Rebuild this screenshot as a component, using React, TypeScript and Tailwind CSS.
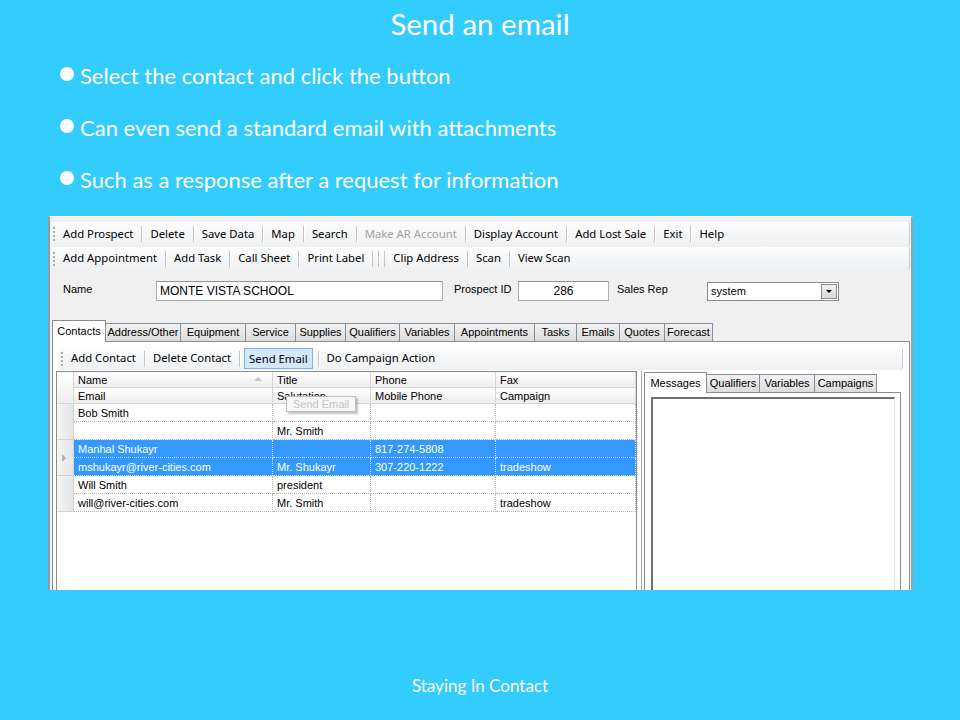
import React from "react";

const ui = "font-['Liberation_Sans',Arial,sans-serif]";
const strip = "font-['Noto_Sans',sans-serif]";

const row1 = ["Add Prospect", "|", "Delete", "|", "Save Data", "|", "Map", "|", "Search", "|", "~Make AR Account", "|", "Display Account", "|", "Add Lost Sale", "|", "Exit", "|", "Help"];
const row2 = ["Add Appointment", "|", "Add Task", "|", "Call Sheet", "|", "Print Label", "|||", "Clip Address", "|", "Scan", "|", "View Scan"];
const contactTools = ["Add Contact", "|", "Delete Contact", "|", "*Send Email", "|", "Do Campaign Action"];

const mainTabs: [string, number][] = [
  ["Address/Other", 75],
  ["Equipment", 65],
  ["Service", 50],
  ["Supplies", 50],
  ["Qualifiers", 54],
  ["Variables", 55],
  ["Appointments", 80],
  ["Tasks", 42],
  ["Emails", 43],
  ["Quotes", 45],
  ["Forecast", 48],
];

const sideTabs: [string, number][] = [
  ["Qualifiers", 53],
  ["Variables", 55],
  ["Campaigns", 62],
];

type Contact = { top: string[]; bottom: string[]; selected?: boolean };

const contacts: Contact[] = [
  { top: ["Bob Smith", "", "", ""], bottom: ["", "Mr. Smith", "", ""] },
  {
    top: ["Manhal Shukayr", "", "817-274-5808", ""],
    bottom: ["mshukayr@river-cities.com", "Mr. Shukayr", "307-220-1222", "tradeshow"],
    selected: true,
  },
  { top: ["Will Smith", "president", "", ""], bottom: ["will@river-cities.com", "Mr. Smith", "", "tradeshow"] },
];

const colWidths = ["w-[199px]", "w-[98px]", "w-[125px]", "w-[140px]"];

function Grip() {
  return <div className="h-[14px] w-0 border-l-2 border-dotted border-[#a8a8a8]" />;
}

function Sep() {
  return <div className="mx-[8px] h-[16px] w-px bg-[#c4c4c4] shadow-[1px_0_0_#ffffff]" />;
}

function ToolRow({ items, h = "h-[24px]" }: { items: string[]; h?: string }) {
  return (
    <div className={`flex ${h} items-center rounded-r-[3px] border-r border-[#c9ced3] bg-linear-to-b from-[#fdfdfd] to-[#eef0f2] ${strip} text-[11.3px] text-black`}>
      <div className="ml-[2px] mr-[8px]">
        <Grip />
      </div>
      {items.map((it, i) => {
        if (it === "|") return <Sep key={i} />;
        if (it === "|||")
          return (
            <div key={i} className="mx-[8px] flex gap-[5px]">
              <div className="h-[16px] w-px bg-[#c4c4c4]" />
              <div className="h-[16px] w-px bg-[#c4c4c4]" />
              <div className="h-[16px] w-px bg-[#c4c4c4]" />
            </div>
          );
        if (it.startsWith("~"))
          return (
            <span key={i} className="whitespace-nowrap text-[#a3a3a3]">
              {it.slice(1)}
            </span>
          );
        if (it.startsWith("*"))
          return (
            <span key={i} className="-ml-[4px] -mr-[3px] whitespace-nowrap border border-[#7eb4ea] bg-[#d1e8ff] px-[4px] leading-[19px]">
              {it.slice(1)}
            </span>
          );
        return (
          <span key={i} className="whitespace-nowrap">
            {it}
          </span>
        );
      })}
    </div>
  );
}

function HeaderCell({ text, w, sort }: { text: string; w: string; sort?: boolean }) {
  return (
    <div className={`relative flex h-[16px] ${w} items-center border-r border-b border-[#d5d5d5] bg-linear-to-b from-[#ffffff] to-[#eeeeee] pl-[4px] leading-[16px]`}>
      {text}
      {sort && <span className="absolute right-[10px] top-[5px] h-0 w-0 border-x-[4px] border-b-[4px] border-x-transparent border-b-[#c4c4c4]" />}
    </div>
  );
}

function DataCell({ text, w, selected }: { text: string; w: string; selected?: boolean }) {
  return (
    <div
      className={`h-[18px] ${w} overflow-hidden whitespace-nowrap border-r border-b border-dotted pl-[4px] leading-[18px] ${
        selected ? "border-[#d6e9ff] bg-[#3399ff] text-white" : "border-[#b4b4b4] text-black"
      }`}
    >
      {text}
    </div>
  );
}

function ContactGrid() {
  return (
    <div className={`relative h-[230px] w-[581px] border border-[#8d8d8d] bg-white ${ui} text-[11px] text-black`}>
      <div className="flex">
        <div className="h-[32px] w-[17px] border-r border-b border-[#d5d5d5] bg-linear-to-b from-[#ffffff] to-[#eeeeee]" />
        <div>
          <div className="flex">
            <HeaderCell text="Name" w={colWidths[0]} sort />
            <HeaderCell text="Title" w={colWidths[1]} />
            <HeaderCell text="Phone" w={colWidths[2]} />
            <HeaderCell text="Fax" w={colWidths[3]} />
          </div>
          <div className="flex">
            <HeaderCell text="Email" w={colWidths[0]} />
            <HeaderCell text="Salutation" w={colWidths[1]} />
            <HeaderCell text="Mobile Phone" w={colWidths[2]} />
            <HeaderCell text="Campaign" w={colWidths[3]} />
          </div>
        </div>
      </div>
      {contacts.map((c, i) => (
        <div key={i} className="flex">
          <div className="relative h-[36px] w-[17px] border-r border-b border-[#d0d0d0] bg-linear-to-r from-[#f4f4f4] to-[#e6e6e6]">
            {c.selected && <span className="absolute left-[5px] top-[14px] h-0 w-0 border-y-[4px] border-l-[4px] border-y-transparent border-l-[#b0b0b0]" />}
          </div>
          <div>
            <div className="flex">
              {c.top.map((t, j) => (
                <DataCell key={j} text={t} w={colWidths[j]} selected={c.selected} />
              ))}
            </div>
            <div className="flex">
              {c.bottom.map((t, j) => (
                <DataCell key={j} text={t} w={colWidths[j]} selected={c.selected} />
              ))}
            </div>
          </div>
        </div>
      ))}
      {/* tooltip fading in over the Salutation header */}
      <div className="absolute left-[229px] top-[24px] flex h-[16px] w-[70px] items-center border border-[#bdbdbd] bg-[#f7f7f7] pl-[6px] text-[11px] text-[#c4c4c4] shadow-[2px_2px_2px_rgba(0,0,0,0.25)]">
        Send Email
      </div>
    </div>
  );
}

function SidePanel() {
  return (
    <div className={`ml-[4px] h-[230px] w-[267px] border-l border-[#a9a9a9] pl-[2px] ${ui} text-[11px] text-black`}>
      <div className="flex h-[21px] items-end">
        <div className="relative z-10 -mb-px flex h-[21px] w-[63px] items-start justify-center border border-b-0 border-[#898c95] bg-white pt-[2px]">
          Messages
        </div>
        {sideTabs.map(([t, w]) => (
          <div
            key={t}
            style={{ width: w }}
            className="flex h-[18px] items-center justify-center border border-l-0 border-b-0 border-[#898c95] bg-linear-to-b from-[#f2f2f2] to-[#dcdcdc]"
          >
            {t}
          </div>
        ))}
      </div>
      <div className="h-[220px] w-[257px] border border-[#898c95] bg-white pl-[6px] pt-[4px]">
        <div className="h-[220px] w-[244px] border-t-2 border-l-2 border-[#6f6f6f] border-r border-r-[#e3e3e3] bg-white" />
      </div>
    </div>
  );
}

function AppWindow() {
  return (
    <div className="ml-[48px] h-[374px] w-[865px] overflow-hidden border-t border-l-2 border-r-2 border-t-white border-l-[#8f9aa5] border-r-[#9aa3ab] bg-[#f0f0f0]">
      <div className="ml-px mr-px mt-[5px] flex flex-col gap-px">
        <ToolRow items={row1} />
        <ToolRow items={row2} h="h-[23px]" />
      </div>

      <div className={`mt-[11px] flex h-[20px] items-center pl-[13px] ${ui} text-[11px] text-black`}>
        <span className="-mt-[3px] w-[93px]">Name</span>
        <div className="flex h-[20px] w-[287px] items-center border border-[#abadb3] border-t-[#8f939c] bg-white pl-[3px] text-[12px]">
          MONTE VISTA SCHOOL
        </div>
        <span className="-mt-[3px] ml-[11px] w-[64px]">Prospect ID</span>
        <div className="flex h-[20px] w-[91px] items-center justify-center border border-[#abadb3] border-t-[#8f939c] bg-white text-[12px]">
          286
        </div>
        <span className="-mt-[3px] ml-[8px] w-[90px]">Sales Rep</span>
        <div className="flex h-[19px] w-[132px] items-center border border-[#8b8b8b] bg-white pl-[3px] text-[11px]">
          <span className="flex-1">system</span>
          <div className="mr-px flex h-[15px] w-[16px] items-center justify-center border border-[#8e8f8f] bg-linear-to-b from-[#f2f2f2] to-[#d9d9d9]">
            <span className="h-0 w-0 border-x-[3px] border-t-[3px] border-x-transparent border-t-black" />
          </div>
        </div>
      </div>

      <div className={`ml-[2px] mt-[19px] flex h-[21px] items-end ${ui} text-[11px] text-black`}>
        <div className="relative z-10 -mb-px flex h-[22px] w-[54px] items-start justify-center border border-b-0 border-[#898c95] bg-white pt-[2px]">
          Contacts
        </div>
        {mainTabs.map(([t, w]) => (
          <div
            key={t}
            style={{ width: w }}
            className="flex h-[18px] items-center justify-center border border-l-0 border-b-0 border-[#898c95] bg-linear-to-b from-[#f2f2f2] to-[#dcdcdc]"
          >
            {t}
          </div>
        ))}
      </div>

      <div className="ml-[2px] h-[260px] w-[858px] border border-[#898c95] bg-white">
        <div className="ml-[6px] mr-[6px] mt-[5px]">
          <ToolRow items={contactTools} h="h-[23px]" />
        </div>
        <div className="mt-px flex pl-[3px]">
          <ContactGrid />
          <SidePanel />
        </div>
      </div>
    </div>
  );
}

export default function App() {
  return (
    <div className="h-[720px] w-[960px] overflow-hidden bg-[#33ccff] font-['Lato',sans-serif] text-white">
      <h1 className="pt-[6px] text-center text-[29.5px] leading-[36px]">Send an email</h1>
      <ul className="ml-[60px] mt-[20px] flex flex-col gap-[24px]">
        {[
          "Select the contact and click the button",
          "Can even send a standard email with attachments",
          "Such as a response after a request for information",
        ].map((t) => (
          <li key={t} className="flex h-[28px] items-center gap-[6px] text-[22px] leading-[28px]">
            <span className="-mt-[4px] h-[14px] w-[14px] shrink-0 rounded-full bg-white" />
            {t}
          </li>
        ))}
      </ul>
      <div className="mt-[22px]">
        <AppWindow />
      </div>
      <div className="mt-[86px] text-center text-[17px] leading-[20px]">Staying In Contact</div>
    </div>
  );
}
